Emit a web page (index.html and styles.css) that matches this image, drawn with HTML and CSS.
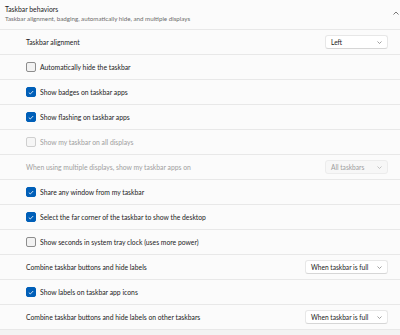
FILE: index.html
```html
<!DOCTYPE html>
<html>
<head>
<meta charset="utf-8">
<link rel="stylesheet" href="styles.css">
</head>
<body>
<div class="card">
  <div class="header">
    <div class="titles">
      <div class="title">Taskbar behaviors</div>
      <div class="subtitle">Taskbar alignment, badging, automatically hide, and multiple displays</div>
    </div>
    <svg class="chev-up" width="6" height="4" viewBox="0 0 6 4"><path d="M0.5 3.5 L3 1 L5.5 3.5" fill="none" stroke="#555" stroke-width="0.8"/></svg>
  </div>
  <div class="row"><span class="label">Taskbar alignment</span>
    <div class="select w-small"><span>Left</span><svg width="5" height="3" viewBox="0 0 5 3"><path d="M0.5 0.5 L2.5 2.5 L4.5 0.5" fill="none" stroke="#777" stroke-width="0.7"/></svg></div>
  </div>
  <div class="row"><span class="cb"></span><span class="label">Automatically hide the taskbar</span></div>
  <div class="row"><span class="cb on"><svg width="6" height="5" viewBox="0 0 6 5"><path d="M0.8 2.6 L2.3 4 L5.2 1" fill="none" stroke="#fff" stroke-width="0.8"/></svg></span><span class="label">Show badges on taskbar apps</span></div>
  <div class="row"><span class="cb on"><svg width="6" height="5" viewBox="0 0 6 5"><path d="M0.8 2.6 L2.3 4 L5.2 1" fill="none" stroke="#fff" stroke-width="0.8"/></svg></span><span class="label">Show flashing on taskbar apps</span></div>
  <div class="row disabled"><span class="cb"></span><span class="label">Show my taskbar on all displays</span></div>
  <div class="row disabled"><span class="label">When using multiple displays, show my taskbar apps on</span>
    <div class="select w-small"><span>All taskbars</span><svg width="5" height="3" viewBox="0 0 5 3"><path d="M0.5 0.5 L2.5 2.5 L4.5 0.5" fill="none" stroke="#aaa" stroke-width="0.7"/></svg></div>
  </div>
  <div class="row"><span class="cb on"><svg width="6" height="5" viewBox="0 0 6 5"><path d="M0.8 2.6 L2.3 4 L5.2 1" fill="none" stroke="#fff" stroke-width="0.8"/></svg></span><span class="label">Share any window from my taskbar</span></div>
  <div class="row"><span class="cb on"><svg width="6" height="5" viewBox="0 0 6 5"><path d="M0.8 2.6 L2.3 4 L5.2 1" fill="none" stroke="#fff" stroke-width="0.8"/></svg></span><span class="label">Select the far corner of the taskbar to show the desktop</span></div>
  <div class="row"><span class="cb"></span><span class="label">Show seconds in system tray clock (uses more power)</span></div>
  <div class="row"><span class="label">Combine taskbar buttons and hide labels</span>
    <div class="select w-large"><span>When taskbar is full</span><svg width="5" height="3" viewBox="0 0 5 3"><path d="M0.5 0.5 L2.5 2.5 L4.5 0.5" fill="none" stroke="#777" stroke-width="0.7"/></svg></div>
  </div>
  <div class="row"><span class="cb on"><svg width="6" height="5" viewBox="0 0 6 5"><path d="M0.8 2.6 L2.3 4 L5.2 1" fill="none" stroke="#fff" stroke-width="0.8"/></svg></span><span class="label">Show labels on taskbar app icons</span></div>
  <div class="row"><span class="label">Combine taskbar buttons and hide labels on other taskbars</span>
    <div class="select w-large"><span>When taskbar is full</span><svg width="5" height="3" viewBox="0 0 5 3"><path d="M0.5 0.5 L2.5 2.5 L4.5 0.5" fill="none" stroke="#777" stroke-width="0.7"/></svg></div>
  </div>
</div>
</body>
</html>
```
FILE: styles.css
```css
html, body {
  margin: 0;
  padding: 0;
}
body {
  background: #f3f3f3;
  font-family: "Lato", "Open Sans", sans-serif;
  color: #1b1b1b;
  width: 400px;
  height: 335px;
  overflow: hidden;
}
.card {
  background: #fbfbfb;
}
.header {
  height: 29px;
  border-bottom: 1px solid #e8e8e8;
  display: flex;
  align-items: center;
  padding: 0 0 0 5px;
  box-sizing: content-box;
}
.titles {
  flex: 1;
  display: flex;
  flex-direction: column;
  gap: 1px;
  margin-top: -2px;
}
.title {
  font-size: 6.8px;
  line-height: 9px;
  color: #1b1b1b;
}
.subtitle {
  font-size: 6.2px;
  line-height: 7px;
  color: #6b6b6b;
}
.chev-up {
  margin-right: 1px;
  margin-top: -4px;
}
.row {
  height: 24px;
  border-bottom: 1px solid #e8e8e8;
  display: flex;
  align-items: center;
  padding: 0 12px 0 26px;
}
.label {
  font-size: 6.8px;
  flex: 1;
  white-space: nowrap;
}
.cb {
  width: 8px;
  height: 8px;
  border: 1px solid #8d8d8d;
  border-radius: 2px;
  background: #f2f2f2;
  margin-right: 4px;
  display: flex;
  align-items: center;
  justify-content: center;
  flex: none;
}
.cb.on {
  background: #005fb8;
  border-color: #005fb8;
}
.disabled .label {
  color: #a0a0a0;
}
.disabled .cb {
  border-color: #cfcfcf;
  background: #f6f6f6;
}
.select {
  height: 14px;
  box-sizing: border-box;
  background: #ffffff;
  border: 1px solid #e7e7e7;
  border-bottom-color: #d6d6d6;
  border-radius: 3px;
  display: flex;
  align-items: center;
  justify-content: space-between;
  padding: 0 5px 0 5px;
  font-size: 6.6px;
  color: #1b1b1b;
}
.w-small { width: 63px; }
.w-large { width: 83px; }
.disabled .select {
  background: #f7f7f7;
  color: #9d9d9d;
  border-color: #ececec;
}
```
